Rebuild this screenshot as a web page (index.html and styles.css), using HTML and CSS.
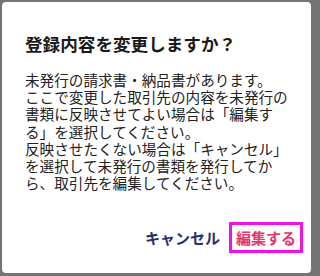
FILE: index.html
```html
<!DOCTYPE html>
<html lang="ja">
<head>
<meta charset="utf-8">
<link rel="stylesheet" href="styles.css">
</head>
<body>
<div class="dialog" role="dialog">
  <h2 class="title">登録内容を変更しますか？</h2>
  <p class="message">未発行の請求書・納品書があります。<br>ここで変更した取引先の内容を未発行の書類に反映させてよい場合は「編集する」を選択してください。<br>反映させたくない場合は「キャンセル」を選択して未発行の書類を発行してから、取引先を編集してください。</p>
  <div class="actions">
    <button class="btn btn-cancel">キャンセル</button>
    <button class="btn btn-edit">編集する</button>
  </div>
</div>
</body>
</html>
```

FILE: styles.css
```css
html, body {
  margin: 0;
  padding: 0;
}
body {
  width: 314px;
  height: 276px;
  background: #747474;
  padding: 2px 3px 3px 2px;
  box-sizing: border-box;
  font-family: "Noto Sans CJK JP", "Noto Sans", sans-serif;
}
.dialog {
  width: 309px;
  height: 271px;
  box-sizing: border-box;
  background: #ffffff;
  border-radius: 4px;
  padding: 31px 8px 0 23px;
  display: flex;
  flex-direction: column;
}
.title {
  margin: 0;
  font-size: 17.6px;
  line-height: 21px;
  font-weight: 700;
  color: #1a1a1a;
}
.message {
  margin: 17px 12px 0 0;
  font-size: 14.6px;
  line-height: 17.2px;
  color: #222222;
  line-break: strict;
}
.actions {
  display: flex;
  justify-content: flex-end;
  align-items: center;
  gap: 2px;
  margin-top: 31px;
}
.btn {
  font-family: inherit;
  font-size: 15px;
  font-weight: 700;
  line-height: 25px;
  background: transparent;
  border: 3px solid transparent;
  padding: 0 4px;
  margin: 0;
  cursor: pointer;
}
.btn-cancel {
  color: #292f6b;
}
.btn-edit {
  color: #e8356c;
  border-color: #f20fe6;
}
```
